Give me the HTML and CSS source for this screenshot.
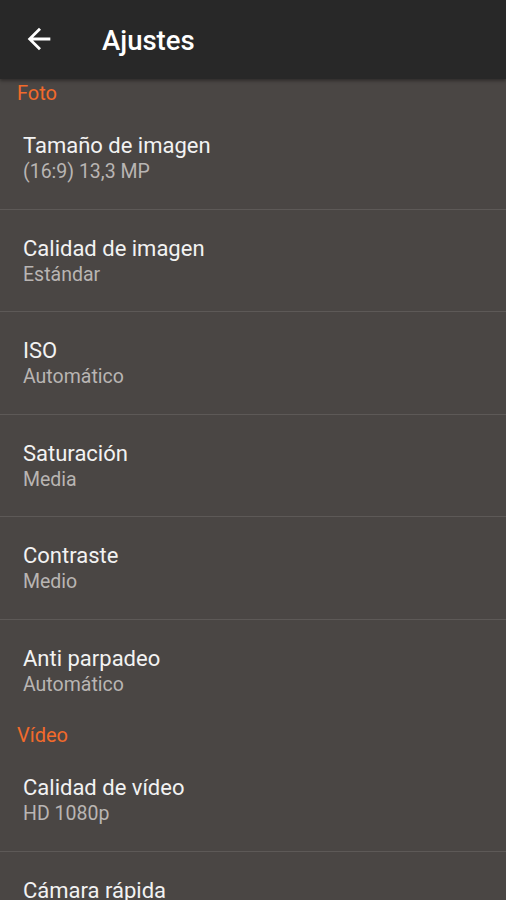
FILE: index.html
```html
<!DOCTYPE html>
<html lang="es">
<head>
  <meta charset="UTF-8">
  <meta name="viewport" content="width=device-width, initial-scale=1.0">
  <title>Ajustes</title>
  <link rel="stylesheet" href="styles.css">
</head>
<body>
  <div class="toolbar">
    <svg class="back" viewBox="0 0 24 24" width="34" height="34">
      <path d="M20 11H7.83l5.59-5.59L12 4l-8 8 8 8 1.41-1.41L7.83 13H20v-2z" fill="#ffffff"/>
    </svg>
    <h1>Ajustes</h1>
  </div>

  <div class="list">
    <div class="header">Foto</div>
    <div class="item">
      <div class="title">Tamaño de imagen</div>
      <div class="summary">(16:9) 13,3 MP</div>
    </div>
    <div class="item">
      <div class="title">Calidad de imagen</div>
      <div class="summary">Estándar</div>
    </div>
    <div class="item">
      <div class="title">ISO</div>
      <div class="summary">Automático</div>
    </div>
    <div class="item">
      <div class="title">Saturación</div>
      <div class="summary">Media</div>
    </div>
    <div class="item">
      <div class="title">Contraste</div>
      <div class="summary">Medio</div>
    </div>
    <div class="item">
      <div class="title">Anti parpadeo</div>
      <div class="summary">Automático</div>
    </div>

    <div class="header">Vídeo</div>
    <div class="item">
      <div class="title">Calidad de vídeo</div>
      <div class="summary">HD 1080p</div>
    </div>
    <div class="item">
      <div class="title">Cámara rápida</div>
    </div>
  </div>
</body>
</html>
```

FILE: styles.css
```css
body {
  font-family: Roboto, "Noto Sans", sans-serif;
  margin: 0;
  padding: 0;
  background-color: #4a4644;
  overflow: hidden;
}
.toolbar {
  height: 79px;
  display: flex;
  align-items: center;
  background-color: #282828;
  box-shadow: 0 2px 3px rgba(0, 0, 0, 0.35);
  position: relative;
}
.back {
  margin-left: 22px;
  margin-top: -1px;
}
.toolbar h1 {
  margin: 2px 0 0 46px;
  font-size: 27.5px;
  font-weight: 500;
  color: #ffffff;
}
.header {
  height: 27px;
  line-height: 28px;
  padding-left: 17px;
  font-size: 20px;
  color: #f26a2b;
}
.item {
  height: 102.5px;
  box-sizing: border-box;
  padding: 25px 23px 0;
  border-top: 1px solid #5d5957;
}
.header + .item {
  border-top: none;
  padding-top: 26px;
}
.title {
  font-size: 22px;
  line-height: 27px;
  color: #f2f2f2;
}
.summary {
  font-size: 19.5px;
  line-height: 26px;
  color: #b9b5b3;
}
```
